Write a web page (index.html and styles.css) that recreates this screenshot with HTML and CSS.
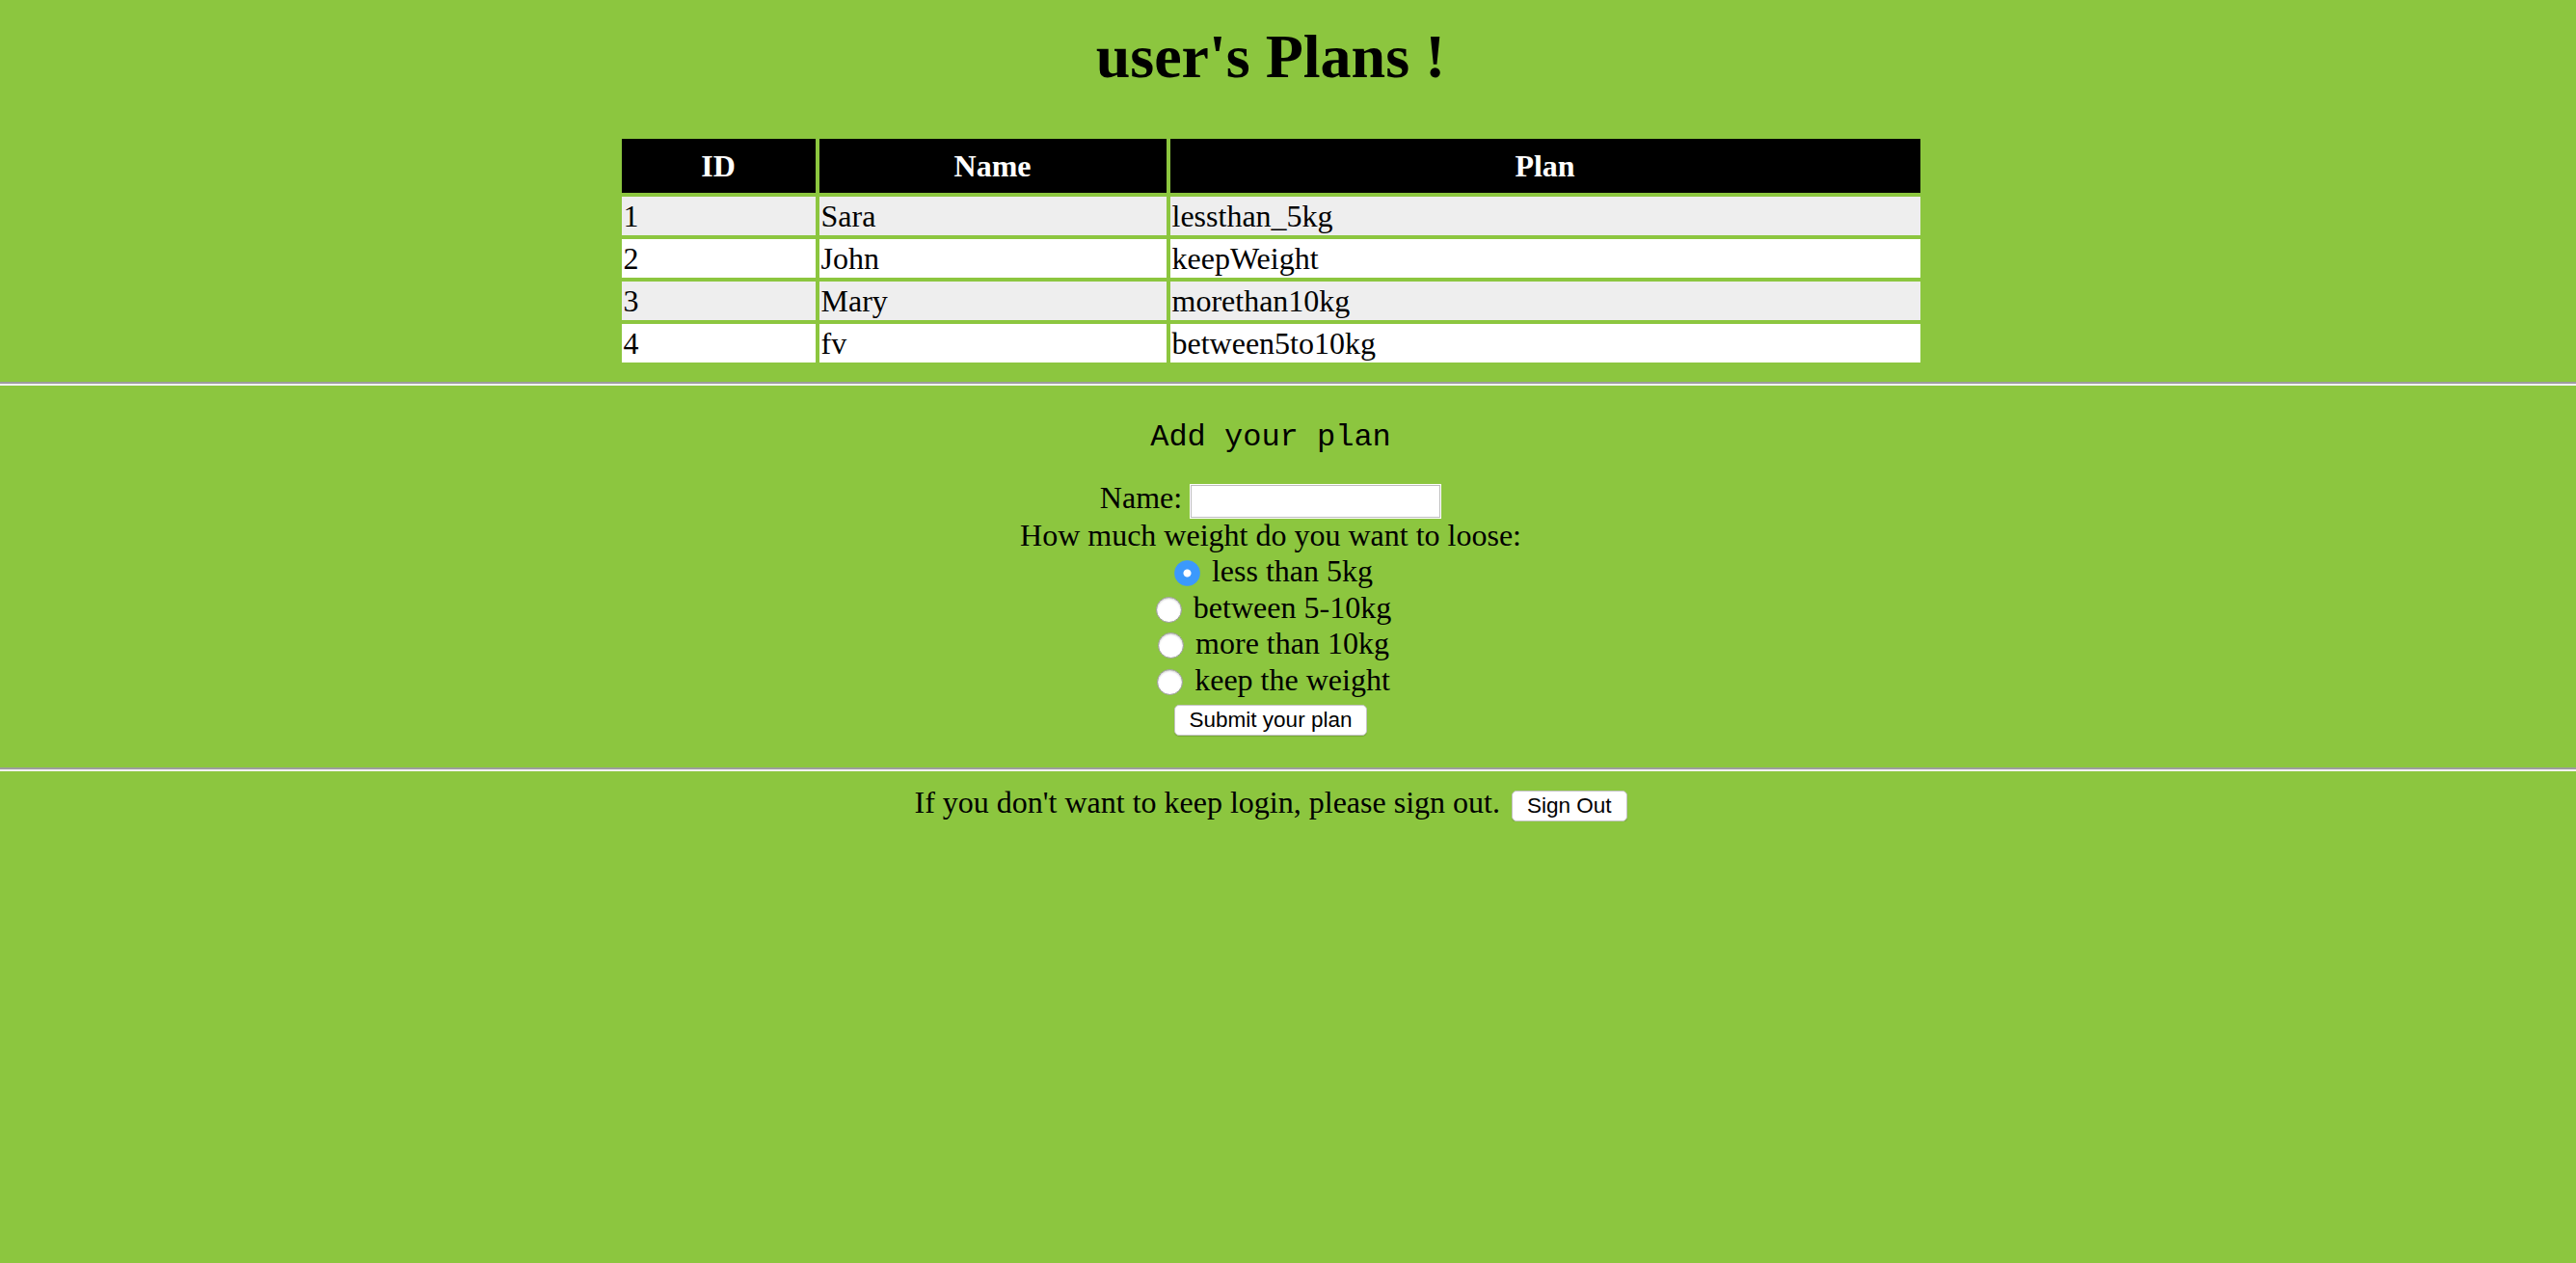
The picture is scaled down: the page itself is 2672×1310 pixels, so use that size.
FILE: index.html
```html
<!DOCTYPE html>
<html lang="en">
<head>
<meta charset="utf-8">
<title>user's Plans</title>
<link rel="stylesheet" href="styles.css">
</head>
<body>
<h1 class="title shift">user's Plans !</h1>
<div class="shift">
  <table class="plans">
    <thead>
      <tr><th class="col-id">ID</th><th class="col-name">Name</th><th class="col-plan">Plan</th></tr>
    </thead>
    <tbody>
      <tr class="odd"><td>1</td><td>Sara</td><td>lessthan_5kg</td></tr>
      <tr><td>2</td><td>John</td><td>keepWeight</td></tr>
      <tr class="odd"><td>3</td><td>Mary</td><td>morethan10kg</td></tr>
      <tr><td>4</td><td>fv</td><td>between5to10kg</td></tr>
    </tbody>
  </table>
</div>
<hr class="rule rule-top">
<div class="shift">
  <p class="add-title">Add your plan</p>
  <form class="plan-form">
    <div class="line">Name: <input type="text" class="name-input"></div>
    <div class="line">How much weight do you want to loose:</div>
    <div class="line"><input type="radio" class="radio" name="plan" checked> less than 5kg</div>
    <div class="line"><input type="radio" class="radio" name="plan"> between 5-10kg</div>
    <div class="line"><input type="radio" class="radio" name="plan"> more than 10kg</div>
    <div class="line"><input type="radio" class="radio" name="plan"> keep the weight</div>
    <div class="line"><button type="button" class="btn">Submit your plan</button></div>
  </form>
</div>
<hr class="rule rule-bottom">
<div class="shift signout">If you don't want to keep login, please sign out. <button type="button" class="btn btn-out">Sign Out</button></div>
</body>
</html>
```
FILE: styles.css
```css
html, body {
  margin: 0;
  padding: 0;
}
body {
  background: #8cc63f;
  color: #000;
  font-family: "Liberation Serif", "Times New Roman", serif;
  font-size: 32px;
}
.shift {
  padding-right: 36px;
  text-align: center;
}
.title {
  margin: 23px 0 45px;
  font-size: 64px;
  line-height: 72px;
  font-weight: bold;
}
.plans {
  margin: 0 auto;
  width: 1355px;
  table-layout: fixed;
  border-collapse: separate;
  border-spacing: 4px;
  text-align: left;
  font-size: 32px;
}
.plans th, .plans td {
  box-sizing: border-box;
}
.col-id { width: 201px; }
.col-name { width: 360px; }
.col-plan { width: 778px; }
.plans th {
  background: #000;
  color: #fff;
  font-weight: bold;
  text-align: center;
  padding: 10px 2px;
  line-height: 36px;
}
.plans td {
  background: #fff;
  padding: 2px;
  line-height: 36px;
}
.plans tr.odd td {
  background: #eeeeee;
}
.rule {
  border: 0;
  height: 0;
  border-top: 2px solid #9d9d9d;
  border-bottom: 2px solid #f2f2f2;
  margin: 0;
}
.rule-top { margin-top: 16px; }
.rule-bottom { margin-top: 33px; }
.add-title {
  font-family: "Liberation Mono", "Courier New", monospace;
  font-size: 32px;
  line-height: 36px;
  margin: 36px 0 26px;
}
.plan-form {
  margin: 0;
}
.line {
  line-height: 37.6px;
}
.name-input {
  box-sizing: border-box;
  width: 259px;
  height: 34px;
  margin: 0 1px;
  padding: 0 4px;
  border: 1px solid #bdbdbd;
  box-shadow: 0 0 0 1px #fff;
  background: #fff;
  vertical-align: middle;
  font-size: 26px;
}
.radio {
  appearance: none;
  -webkit-appearance: none;
  box-sizing: border-box;
  width: 27px;
  height: 27px;
  margin: 0 4px 0 6px;
  border-radius: 50%;
  border: 1px solid #999;
  background: #fff;
  box-shadow: inset 0 1px 2px rgba(0,0,0,0.22);
  vertical-align: -5px;
}
.radio:checked {
  border-color: #3b99fc;
  background: radial-gradient(circle, #fff 0 3.5px, #3b99fc 4.5px);
  box-shadow: none;
}
.btn {
  box-sizing: border-box;
  height: 32px;
  padding: 0 15px;
  margin: 0;
  border: 1px solid #c4c4c4;
  border-radius: 5px;
  background: #fff;
  color: #000;
  font-family: "Liberation Sans", Arial, sans-serif;
  font-size: 22.5px;
  line-height: 30px;
  box-shadow: 0 1px 1px rgba(0,0,0,0.15);
}
.btn-out {
  margin-left: 4px;
}
.signout {
  margin-top: 14px;
  line-height: 37.6px;
}
```
